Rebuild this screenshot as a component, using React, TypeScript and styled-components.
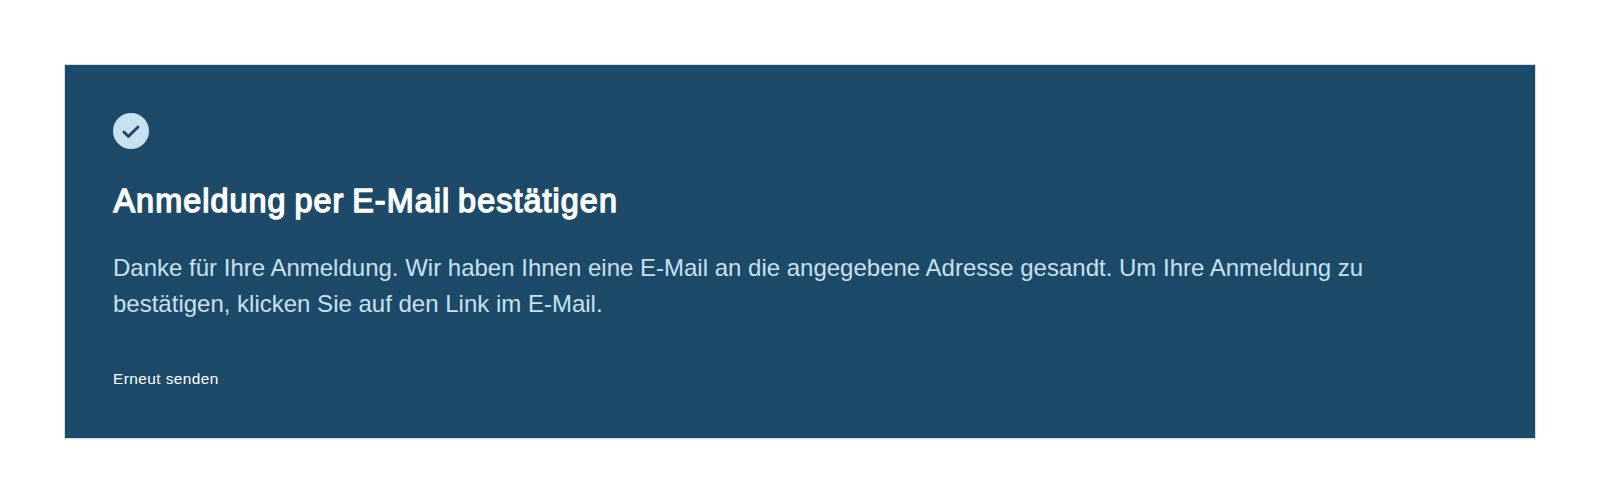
import React from "react";
import styled, { createGlobalStyle } from "styled-components";

const GlobalStyle = createGlobalStyle`
  body { margin: 0; background: #fff; font-family: "Liberation Sans", Arial, sans-serif; }
`;
const Page = styled.main`
  padding: 64px;
`;
const Card = styled.section`
  box-sizing: border-box;
  height: 375px;
  padding: 48px;
  border: 1px solid #c8e1f0;
  background: #1e4a69;
`;
const CheckIcon = styled.svg`
  display: block;
  width: 36px;
  height: 36px;
`;
const Title = styled.h1`
  margin: 32px 0 0;
  padding-left: 0.5px;
  font-size: 32.3px;
  line-height: 40px;
  font-weight: 400;
  letter-spacing: 1.08px;
  word-spacing: -2.2px;
  -webkit-text-stroke: 1.45px #fff;
  color: #fff;
`;
const Message = styled.p`
  margin: 29px 0 0;
  max-width: 1280px;
  font-size: 24px;
  line-height: 36px;
  color: #c8e1f0;
`;
const Resend = styled.button`
  display: block;
  margin: 45px 0 0;
  padding: 0;
  border: 0;
  background: none;
  font: 15.4px/24px "Liberation Sans", Arial, sans-serif;
  letter-spacing: 0.43px;
  color: #fff;
  cursor: pointer;
`;

export default function App() {
  return (
    <Page>
      <GlobalStyle />
      <Card>
        <CheckIcon viewBox="0 0 36 36" aria-hidden="true">
          <circle cx="18" cy="18" r="18" fill="#c8e1f0" />
          <path
            d="M10.9 19L15.4 23.4L25 14"
            fill="none"
            stroke="#1e4a69"
            strokeWidth="2.9"
            strokeLinecap="round"
            strokeLinejoin="round"
          />
        </CheckIcon>
        <Title>Anmeldung per E-Mail bestätigen</Title>
        <Message>
          Danke für Ihre Anmeldung. Wir haben Ihnen eine E-Mail an die angegebene Adresse gesandt. Um Ihre
          Anmeldung zu bestätigen, klicken Sie auf den Link im E-Mail.
        </Message>
        <Resend type="button">Erneut senden</Resend>
      </Card>
    </Page>
  );
}
